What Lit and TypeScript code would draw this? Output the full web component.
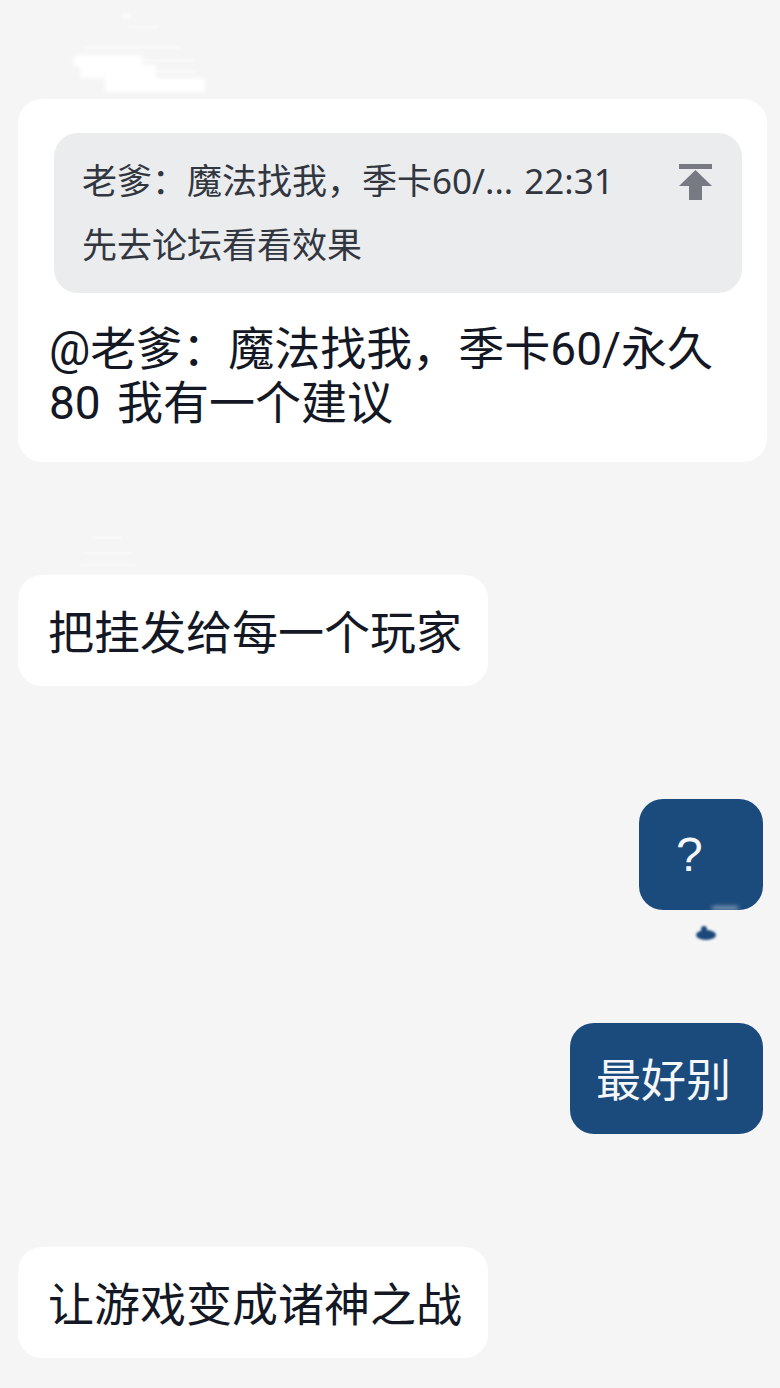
import { LitElement, html, css } from 'lit';
import { customElement } from 'lit/decorators.js';

@customElement('app-root')
export class AppRoot extends LitElement {
  static styles = css`
    :host {
      display: block;
      position: relative;
      width: 780px;
      height: 1388px;
      overflow: hidden;
      background: #f5f5f6;
      font-family: "Noto Sans", "Noto Sans CJK SC", sans-serif;
      color: #131824;
    }

    .list {
      display: flex;
      flex-direction: column;
      gap: 113px;
      padding: 99px 17px 0 18px;
    }

    .card {
      box-sizing: border-box;
      width: 749px;
      height: 363px;
      padding: 34px 25px 0 36px;
      background: #fff;
      border-radius: 24px;
    }

    .quote {
      box-sizing: border-box;
      height: 160px;
      padding: 25px 28px 0 28px;
      background: #ebecee;
      border-radius: 24px;
      color: #31363f;
      font-size: 35px;
      line-height: 46px;
      word-spacing: 2px;
    }

    .quote-top {
      display: flex;
      justify-content: space-between;
      align-items: flex-start;
    }

    .quote-top svg {
      width: 36px;
      height: 38px;
      margin: 6px 1px 0 0;
    }

    .quote-body {
      margin-top: 18px;
    }

    .card-text {
      margin: 29px 0 0 -5px;
      font-family: Roboto, "Noto Sans CJK SC", sans-serif;
      font-size: 46px;
      line-height: 54px;
      word-spacing: 5px;
    }

    .bubble {
      box-sizing: border-box;
      height: 111px;
      display: flex;
      align-items: center;
      font-size: 46px;
      line-height: 54px;
      border-radius: 24px;
    }

    .in {
      align-self: flex-start;
      width: 470px;
      padding-left: 30px;
      background: #fff;
    }

    .out {
      align-self: flex-end;
      background: #1b4a7c;
      color: #f5f7fa;
    }

    .q {
      width: 124px;
      padding-left: 37px;
      font-family: "Liberation Sans", sans-serif;
      font-size: 48px;
    }

    .best {
      width: 193px;
      padding: 3px 0 0 26px;
      font-size: 45px;
    }

    .smudges {
      position: absolute;
      left: 0;
      top: 0;
      pointer-events: none;
    }
  `;

  render() {
    return html`
      <div class="list">
        <div class="card">
          <div class="quote">
            <div class="quote-top">
              <span>老爹：魔法找我，季卡60/... 22:31</span>
              <svg viewBox="0 0 36 38">
                <rect x="2" y="0" width="33" height="5" fill="#777a82"></rect>
                <path d="M18.5 6 L35 22 L25 22 L25 36 L12 36 L12 22 L2 22 Z" fill="#777a82"></path>
              </svg>
            </div>
            <div class="quote-body">先去论坛看看效果</div>
          </div>
          <div class="card-text">@老爹：魔法找我，季卡60/永久<br />80 我有一个建议</div>
        </div>
        <div class="bubble in">把挂发给每一个玩家</div>
        <div class="bubble out q">?</div>
        <div class="bubble out best">最好别</div>
        <div class="bubble in">让游戏变成诸神之战</div>
      </div>
      <svg class="smudges" width="780" height="1388">
        <defs>
          <filter id="soft"><feGaussianBlur stdDeviation="2"></feGaussianBlur></filter>
          <filter id="faint"><feGaussianBlur stdDeviation="1.2"></feGaussianBlur></filter>
        </defs>
        <g filter="url(#soft)" fill="#ffffff">
          <rect x="122" y="14" width="9" height="4"></rect>
          <rect x="74" y="55" width="68" height="11"></rect>
          <rect x="80" y="65" width="76" height="13"></rect>
          <rect x="105" y="78" width="100" height="14"></rect>
          <rect x="712" y="906" width="26" height="4" opacity="0.45"></rect>
        </g>
        <g filter="url(#faint)" fill="#ffffff" opacity="0.55">
          <rect x="128" y="26" width="30" height="2"></rect>
          <rect x="85" y="46" width="95" height="3"></rect>
          <rect x="130" y="59" width="65" height="3"></rect>
          <rect x="155" y="70" width="40" height="3"></rect>
          <rect x="92" y="536" width="30" height="3"></rect>
          <rect x="84" y="552" width="50" height="2"></rect>
          <rect x="80" y="564" width="55" height="2"></rect>
        </g>
        <g filter="url(#faint)" fill="#1b4a7c">
          <ellipse cx="706" cy="935" rx="10" ry="5"></ellipse>
          <ellipse cx="704" cy="929" rx="3" ry="3"></ellipse>
        </g>
      </svg>
    `;
  }
}
